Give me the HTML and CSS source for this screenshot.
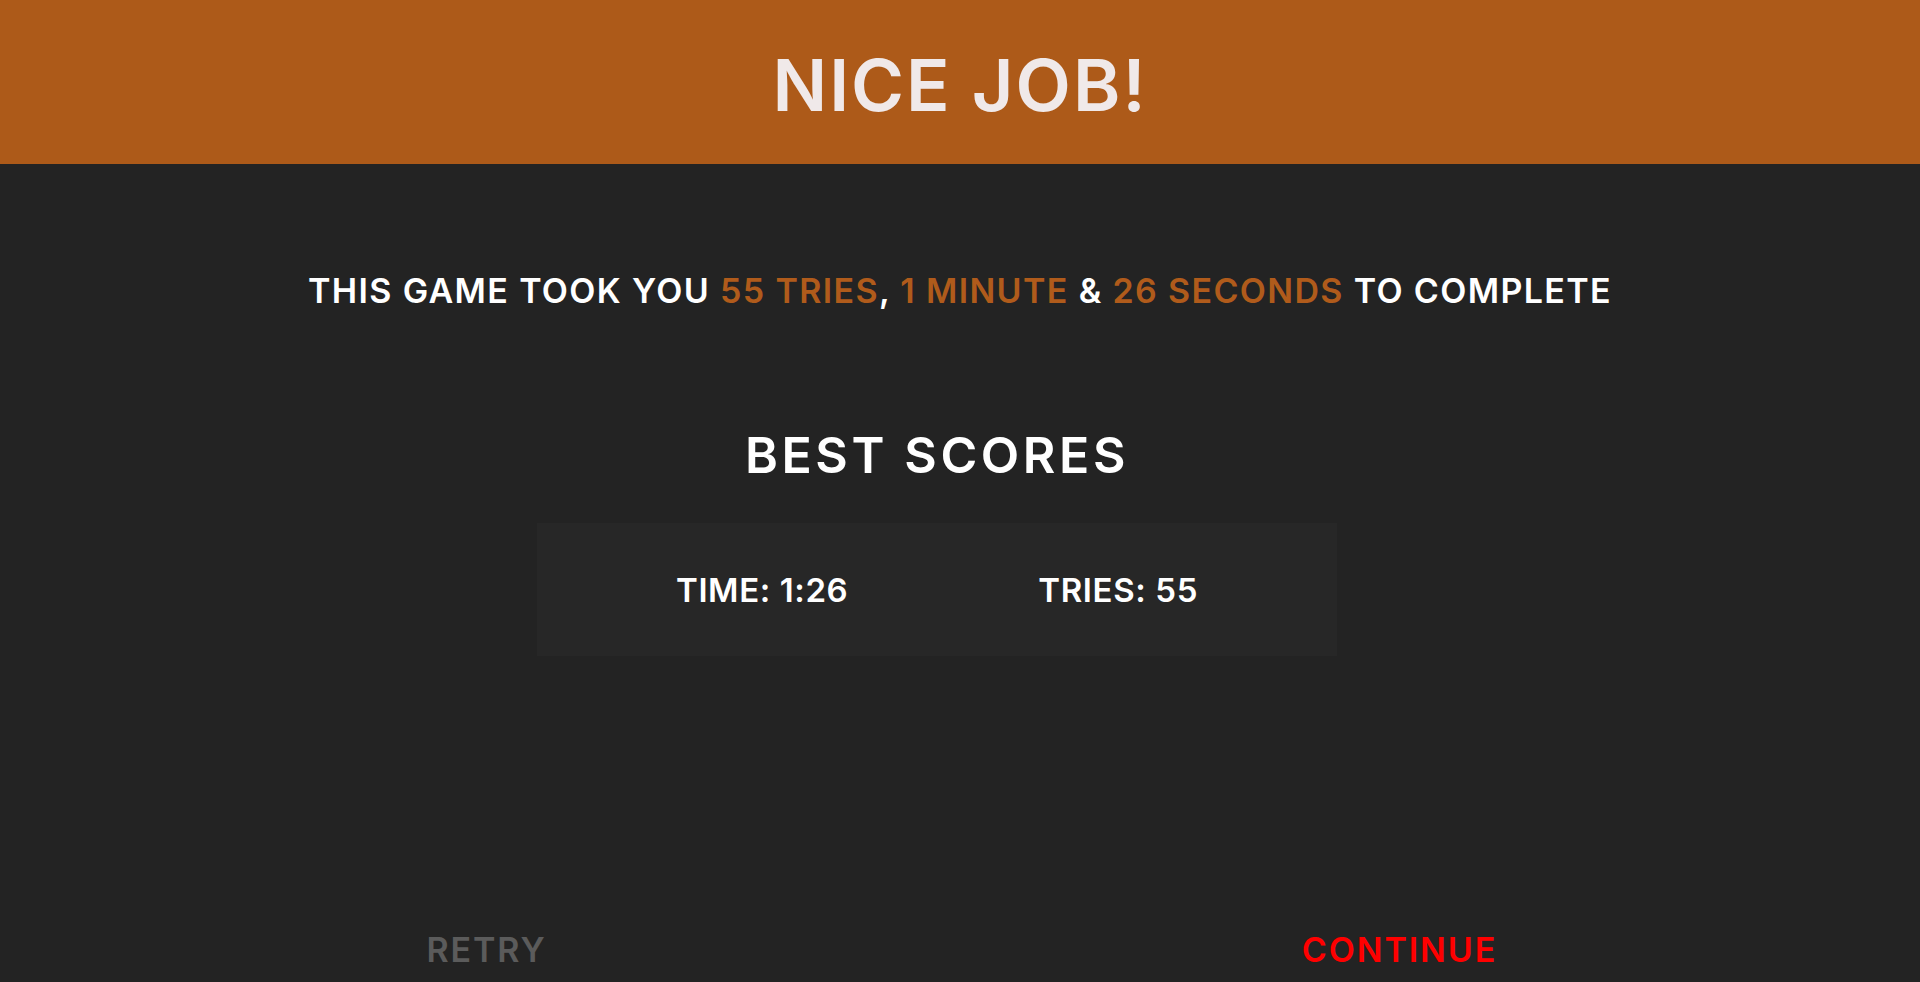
FILE: index.html
```html
<!DOCTYPE html>
<html lang="en">
<head>
<meta charset="utf-8">
<title>Nice Job!</title>
<link rel="stylesheet" href="styles.css">
</head>
<body>
<header class="header">
  <h1 class="title">NICE JOB!</h1>
</header>
<main class="main">
  <p class="summary">THIS GAME TOOK YOU <span class="hl">55 TRIES</span>, <span class="hl">1 MINUTE</span> &amp; <span class="hl">26 SECONDS</span> TO COMPLETE</p>
  <section class="scores">
    <h2 class="scores-title">BEST SCORES</h2>
    <div class="scores-box">
      <span class="score">TIME: 1:26</span>
      <span class="score">TRIES: 55</span>
    </div>
  </section>
  <nav class="actions">
    <button class="btn btn-retry">RETRY</button>
    <button class="btn btn-continue">CONTINUE</button>
  </nav>
</main>
</body>
</html>
```

FILE: styles.css
```css
html, body {
  margin: 0;
  padding: 0;
  height: 100%;
  background: #232323;
  font-family: Inter, "Open Sans", "Liberation Sans", sans-serif;
  color: #ffffff;
  overflow: hidden;
}

.header {
  height: 164px;
  box-sizing: border-box;
  padding-top: 6px;
  background: #ad5a19;
  display: flex;
  align-items: center;
  justify-content: center;
}

.title {
  margin: 0;
  font-size: 72px;
  font-weight: 600;
  line-height: 1;
  color: #f0e9e9;
  letter-spacing: 2px;
}

.main {
  display: flex;
  flex-direction: column;
}

.summary {
  margin: 107px 0 0;
  font-size: 34px;
  font-weight: 600;
  line-height: 40px;
  text-align: center;
  letter-spacing: 1.35px;
}

.hl {
  color: #b05b1b;
}

.scores {
  margin-top: 115px;
  padding-right: 46px;
  display: flex;
  flex-direction: column;
  align-items: center;
}

.scores-title {
  margin: 0;
  font-size: 50px;
  font-weight: 600;
  line-height: 58px;
  letter-spacing: 3.6px;
}

.scores-box {
  margin-top: 39px;
  width: 800px;
  height: 133px;
  box-sizing: border-box;
  padding: 0 139px 0 139px;
  background: #272727;
  display: flex;
  align-items: center;
  justify-content: space-between;
}

.score {
  font-size: 33px;
  font-weight: 600;
  line-height: 40px;
  letter-spacing: 0.6px;
}

.actions {
  margin-top: 274px;
  padding-left: 30px;
  display: grid;
  grid-template-columns: 913px 913px;
}

.btn {
  background: none;
  border: 0;
  padding: 0;
  margin: 0;
  font-family: inherit;
  font-size: 34px;
  font-weight: 600;
  line-height: 40px;
  text-align: center;
  letter-spacing: 1.9px;
  cursor: pointer;
}

.btn-retry {
  color: #5b5b5b;
}

.btn-continue {
  color: #ff0000;
}
```
